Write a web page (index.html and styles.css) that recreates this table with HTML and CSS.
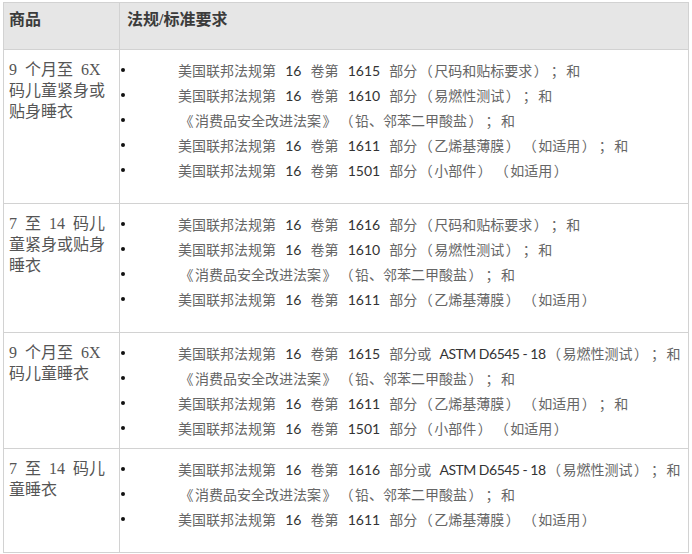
FILE: index.html
```
<!DOCTYPE html>
<html lang="zh-CN">
<head>
<meta charset="utf-8">
<link rel="stylesheet" href="styles.css">
</head>
<body>
<table class="req">
  <thead>
    <tr>
      <th class="c-prod">商品</th>
      <th class="c-req">法规/标准要求</th>
    </tr>
  </thead>
  <tbody>
    <tr class="row">
      <td class="c-prod">9 个月至 6X<br>码儿童紧身或<br>贴身睡衣</td>
      <td class="c-req">
        <ul class="list">
          <li><span class="t">美国联邦法规第 <b>16</b> 卷第 <b>1615</b> 部分<i>（</i>尺码和贴标要求<i>）</i><i>；</i>和</span></li>
          <li><span class="t">美国联邦法规第 <b>16</b> 卷第 <b>1610</b> 部分<i>（</i>易燃性测试<i>）</i><i>；</i>和</span></li>
          <li><span class="t"><i>《</i>消费品安全改进法案<i>》</i><i>（</i>铅、邻苯二甲酸盐<i>）</i><i>；</i>和</span></li>
          <li><span class="t">美国联邦法规第 <b>16</b> 卷第 <b>1611</b> 部分<i>（</i>乙烯基薄膜<i>）</i><i>（</i>如适用<i>）</i><i>；</i>和</span></li>
          <li><span class="t">美国联邦法规第 <b>16</b> 卷第 <b>1501</b> 部分<i>（</i>小部件<i>）</i><i>（</i>如适用<i>）</i></span></li>
        </ul>
      </td>
    </tr>
    <tr class="row">
      <td class="c-prod">7 至 14 码儿<br>童紧身或贴身<br>睡衣</td>
      <td class="c-req">
        <ul class="list">
          <li><span class="t">美国联邦法规第 <b>16</b> 卷第 <b>1616</b> 部分<i>（</i>尺码和贴标要求<i>）</i><i>；</i>和</span></li>
          <li><span class="t">美国联邦法规第 <b>16</b> 卷第 <b>1610</b> 部分<i>（</i>易燃性测试<i>）</i><i>；</i>和</span></li>
          <li><span class="t"><i>《</i>消费品安全改进法案<i>》</i><i>（</i>铅、邻苯二甲酸盐<i>）</i><i>；</i>和</span></li>
          <li><span class="t">美国联邦法规第 <b>16</b> 卷第 <b>1611</b> 部分<i>（</i>乙烯基薄膜<i>）</i><i>（</i>如适用<i>）</i></span></li>
        </ul>
      </td>
    </tr>
    <tr class="row row-short">
      <td class="c-prod">9 个月至 6X<br>码儿童睡衣</td>
      <td class="c-req">
        <ul class="list">
          <li><span class="t">美国联邦法规第 <b>16</b> 卷第 <b>1615</b> 部分或 <b class="std">ASTM D6545 - 18</b><i>（</i>易燃性测试<i>）</i><i>；</i>和</span></li>
          <li><span class="t"><i>《</i>消费品安全改进法案<i>》</i><i>（</i>铅、邻苯二甲酸盐<i>）</i><i>；</i>和</span></li>
          <li><span class="t">美国联邦法规第 <b>16</b> 卷第 <b>1611</b> 部分<i>（</i>乙烯基薄膜<i>）</i><i>（</i>如适用<i>）</i><i>；</i>和</span></li>
          <li><span class="t">美国联邦法规第 <b>16</b> 卷第 <b>1501</b> 部分<i>（</i>小部件<i>）</i><i>（</i>如适用<i>）</i></span></li>
        </ul>
      </td>
    </tr>
    <tr class="row">
      <td class="c-prod">7 至 14 码儿<br>童睡衣</td>
      <td class="c-req">
        <ul class="list">
          <li><span class="t">美国联邦法规第 <b>16</b> 卷第 <b>1616</b> 部分或 <b class="std">ASTM D6545 - 18</b><i>（</i>易燃性测试<i>）</i><i>；</i>和</span></li>
          <li><span class="t"><i>《</i>消费品安全改进法案<i>》</i><i>（</i>铅、邻苯二甲酸盐<i>）</i><i>；</i>和</span></li>
          <li><span class="t">美国联邦法规第 <b>16</b> 卷第 <b>1611</b> 部分<i>（</i>乙烯基薄膜<i>）</i><i>（</i>如适用<i>）</i></span></li>
        </ul>
      </td>
    </tr>
  </tbody>
</table>
</body>
</html>
```
FILE: styles.css
```
html, body {
  margin: 0;
  padding: 0;
  background: #ffffff;
}
body {
  padding: 2px 0 0 3px;
  font-family: "Liberation Serif", "Noto Sans CJK SC", serif;
}
.req {
  border-collapse: collapse;
  width: 686px;
  table-layout: fixed;
}
.req th,
.req td {
  border: 1px solid #d2d2d2;
  vertical-align: top;
  text-align: left;
}
.req thead th {
  background: #e6e6e6;
  height: 47px;
  padding: 6px 0 0 5px;
  font-size: 16px;
  line-height: 22px;
  font-weight: bold;
  color: #3b3b3b;
  box-sizing: border-box;
}
.req th.c-req {
  padding-left: 7px;
}
.req .c-prod {
  width: 116px;
}
.req td.c-prod {
  padding: 9px 0 0 5px;
  font-size: 16px;
  line-height: 21px;
  color: #555555;
  word-spacing: 4px;
}
.req td.c-req {
  padding: 7px 0 21px 0;
}
.row-short td.c-req {
  padding-bottom: 8px;
}
.list {
  margin: 0;
  padding: 0;
  list-style: none;
}
.list li {
  display: flex;
  align-items: center;
  height: 25px;
}
.list li::before {
  content: "";
  width: 4px;
  height: 4px;
  border-radius: 50%;
  background: #111111;
  margin: 0 53px 0 1px;
  flex: none;
}
.t {
  font-family: "Noto Sans CJK SC", sans-serif;
  font-size: 14px;
  color: #666666;
  white-space: pre;
  text-spacing-trim: space-all;
}
.t i {
  font-style: normal;
  padding: 0 1.5px;
}
.t b {
  font-family: "Lato", "Open Sans", sans-serif;
  font-weight: normal;
  font-size: 14px;
  color: #333333;
  margin: 0 6px;
}
.t b.std {
  letter-spacing: -0.5px;
  margin: 0 0 0 5px;
}
```
